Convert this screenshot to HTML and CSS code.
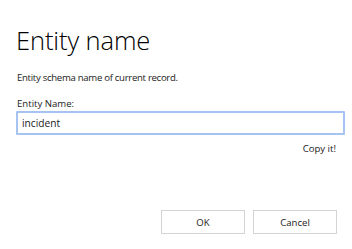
FILE: index.html
```html
<!DOCTYPE html>
<html>
<head>
<meta charset="utf-8">
<link rel="stylesheet" href="styles.css">
</head>
<body>
<div class="dialog">
  <h1 class="title">Entity name</h1>
  <p class="desc">Entity schema name of current record.</p>
  <label class="label" for="en">Entity Name:</label>
  <input class="field" id="en" type="text" value="incident">
  <div class="copy-row"><span class="copy">Copy it!</span></div>
  <div class="buttons">
    <button class="btn">OK</button>
    <button class="btn">Cancel</button>
  </div>
</div>
</body>
</html>
```
FILE: styles.css
```css
html, body {
  margin: 0;
  padding: 0;
  background: #fff;
}
.dialog {
  width: 352px;
  height: 249px;
  box-sizing: border-box;
  padding: 22px 7px 0 16px;
  font-family: "Segoe UI", "Open Sans", sans-serif;
  color: #222;
  display: flex;
  flex-direction: column;
}
.title {
  margin: 0 0 0 0;
  font-size: 25.5px;
  font-weight: 300;
  line-height: 36px;
  color: #000;
  letter-spacing: -0.1px;
}
.desc {
  margin: 14px 0 0 1px;
  font-size: 9.6px;
  line-height: 12px;
  letter-spacing: -0.3px;
}
.label {
  margin: 14px 0 0 1px;
  font-size: 9.6px;
  line-height: 12px;
}
.field {
  margin: 1px 0 0 0;
  width: 329px;
  height: 24px;
  box-sizing: border-box;
  border: 2px solid #a6c3f2;
  border-radius: 1px;
  padding: 0 4px;
  font-family: inherit;
  font-size: 10.2px;
  color: #222;
  outline: none;
}
.copy-row {
  display: flex;
  justify-content: flex-end;
  width: 320px;
  margin-top: 8px;
}
.copy {
  font-size: 9.6px;
  line-height: 12px;
}
.buttons {
  display: flex;
  gap: 8px;
  margin: 55px 0 0 145px;
}
.btn {
  width: 84px;
  height: 24px;
  border: 1px solid #d4d4d4;
  background: #fff;
  font-family: inherit;
  font-size: 9.6px;
  color: #222;
  padding: 0;
}
```
